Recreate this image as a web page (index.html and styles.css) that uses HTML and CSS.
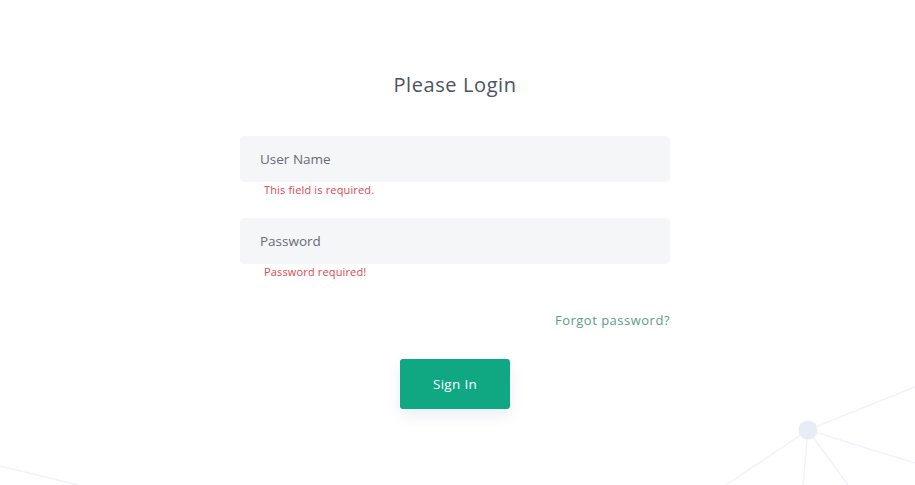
FILE: index.html
```html
<!DOCTYPE html>
<html lang="en">
<head>
<meta charset="utf-8">
<title>Please Login</title>
<link rel="stylesheet" href="styles.css">
</head>
<body>
<svg class="bg-deco" width="915" height="485" viewBox="0 0 915 485" aria-hidden="true">
  <g stroke="#f1f3f8" stroke-width="1.5" fill="none">
    <line x1="808" y1="430" x2="915" y2="387"/>
    <line x1="808" y1="430" x2="915" y2="463"/>
    <line x1="808" y1="430" x2="726" y2="485"/>
    <line x1="808" y1="430" x2="803" y2="485"/>
    <line x1="808" y1="430" x2="848" y2="485"/>
    <line x1="0" y1="466" x2="78" y2="485"/>
  </g>
  <circle cx="808" cy="430" r="9.5" fill="#e6ecf8"/>
</svg>
<main class="login">
  <h1 class="title">Please Login</h1>
  <form class="form">
    <div class="field">
      <input class="input" type="text" placeholder="User Name">
      <div class="error">This field is required.</div>
    </div>
    <div class="field">
      <input class="input" type="password" placeholder="Password">
      <div class="error">Password required!</div>
    </div>
    <div class="forgot-row"><a class="forgot" href="#">Forgot password?</a></div>
    <div class="actions"><button class="btn" type="button">Sign In</button></div>
  </form>
</main>
</body>
</html>
```
FILE: styles.css
```css
html, body {
  margin: 0;
  padding: 0;
  background: #ffffff;
}
body {
  width: 915px;
  height: 485px;
  position: relative;
  overflow: hidden;
  font-family: "Open Sans", "DejaVu Sans", sans-serif;
}
.bg-deco {
  position: absolute;
  left: 0;
  top: 0;
  z-index: 0;
}
.login {
  position: relative;
  z-index: 1;
  display: flex;
  flex-direction: column;
  align-items: center;
  padding-top: 71px;
  margin-left: -5px;
}
.title {
  margin: 0;
  font-size: 20px;
  font-weight: 500;
  color: #4b5261;
  line-height: 28px;
  letter-spacing: 0.6px;
}
.form {
  width: 430px;
  margin-top: 37px;
  display: flex;
  flex-direction: column;
}
.field {
  display: flex;
  flex-direction: column;
  margin-bottom: 11px;
}
.input {
  height: 46px;
  box-sizing: border-box;
  border: 0;
  border-radius: 4px;
  background: #f5f6f8;
  padding: 0 20px;
  font-family: inherit;
  font-size: 13.5px;
  color: #555b67;
  outline: none;
}
.input::placeholder {
  color: #656b77;
}
.error {
  padding-left: 24px;
  margin-top: 0;
  font-size: 11px;
  line-height: 15px;
  letter-spacing: 0.15px;
  color: #e1474f;
  height: 25px;
}
.forgot-row {
  display: flex;
  justify-content: flex-end;
  margin-top: 10px;
}
.forgot {
  font-size: 13px;
  color: #5b9d85;
  text-decoration: none;
  line-height: 20px;
  letter-spacing: 0.5px;
}
.actions {
  display: flex;
  justify-content: center;
  margin-top: 29px;
}
.btn {
  width: 110px;
  height: 50px;
  border: 0;
  border-radius: 3px;
  background: #0fa883;
  color: #ffffff;
  font-family: inherit;
  font-size: 13.5px;
  font-weight: 500;
  letter-spacing: 0.3px;
  box-shadow: 0 6px 14px rgba(60, 80, 140, 0.10);
}
```
